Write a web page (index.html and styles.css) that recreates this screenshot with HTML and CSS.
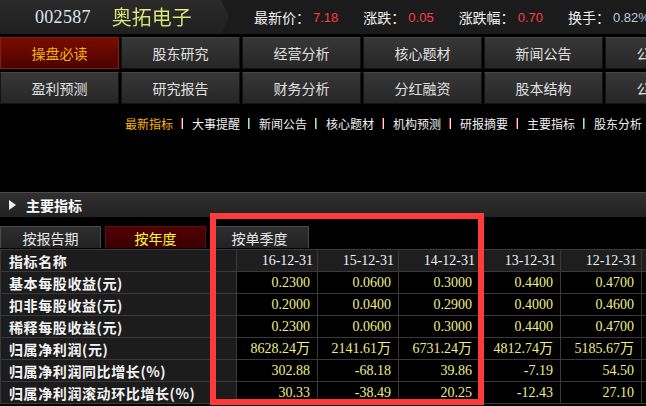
FILE: index.html
```html
<!DOCTYPE html>
<html lang="zh-CN">
<head>
<meta charset="utf-8">
<title>奥拓电子 002587</title>
<link rel="stylesheet" href="styles.css">
</head>
<body>
<div class="page">
  <div class="topbar">
    <div class="ticker">
      <span class="code">002587</span>
      <span class="name">奥拓电子</span>
    </div>
    <div class="quote"><span class="lbl">最新价：</span><span class="val">7.18</span></div>
    <div class="quote"><span class="lbl">涨跌：</span><span class="val">0.05</span></div>
    <div class="quote"><span class="lbl">涨跌幅：</span><span class="val">0.70</span></div>
    <div class="quote"><span class="lbl">换手：</span><span class="val neutral">0.82%</span></div>
  </div>

  <div class="nav">
    <a class="btn active">操盘必读</a>
    <a class="btn">股东研究</a>
    <a class="btn">经营分析</a>
    <a class="btn">核心题材</a>
    <a class="btn">新闻公告</a>
    <a class="btn">公司概况</a>
    <a class="btn">盈利预测</a>
    <a class="btn">研究报告</a>
    <a class="btn">财务分析</a>
    <a class="btn">分红融资</a>
    <a class="btn">股本结构</a>
    <a class="btn">公司大事</a>
  </div>

  <div class="sublinks">
    <a class="sub current">最新指标</a><span class="sep"></span>
    <a class="sub">大事提醒</a><span class="sep alt"></span>
    <a class="sub">新闻公告</a><span class="sep alt"></span>
    <a class="sub">核心题材</a><span class="sep"></span>
    <a class="sub">机构预测</a><span class="sep"></span>
    <a class="sub">研报摘要</a><span class="sep"></span>
    <a class="sub">主要指标</a><span class="sep alt"></span>
    <a class="sub">股东分析</a>
  </div>

  <div class="section">
    <span class="tri"></span>
    <span class="section-title">主要指标</span>
  </div>

  <div class="tabs">
    <span class="tab">按报告期</span>
    <span class="tab active">按年度</span>
    <span class="tab">按单季度</span>
  </div>

  <table class="data">
    <colgroup>
      <col class="c-name">
      <col class="c-val"><col class="c-val"><col class="c-val"><col class="c-val"><col class="c-val"><col class="c-val">
    </colgroup>
    <thead>
      <tr>
        <th class="nm">指标名称</th>
        <th>16-12-31</th><th>15-12-31</th><th>14-12-31</th><th>13-12-31</th><th>12-12-31</th><th>11-12-31</th>
      </tr>
    </thead>
    <tbody>
      <tr><td class="nm">基本每股收益(元)</td><td>0.2300</td><td>0.0600</td><td>0.3000</td><td>0.4400</td><td>0.4700</td><td>0.5000</td></tr>
      <tr><td class="nm">扣非每股收益(元)</td><td>0.2000</td><td>0.0400</td><td>0.2900</td><td>0.4000</td><td>0.4600</td><td>0.4800</td></tr>
      <tr><td class="nm">稀释每股收益(元)</td><td>0.2300</td><td>0.0600</td><td>0.3000</td><td>0.4400</td><td>0.4700</td><td>0.5000</td></tr>
      <tr><td class="nm">归属净利润(元)</td><td>8628.24万</td><td>2141.61万</td><td>6731.24万</td><td>4812.74万</td><td>5185.67万</td><td>5500.00万</td></tr>
      <tr><td class="nm">归属净利润同比增长(%)</td><td>302.88</td><td>-68.18</td><td>39.86</td><td>-7.19</td><td>54.50</td><td>20.00</td></tr>
      <tr><td class="nm">归属净利润滚动环比增长(%)</td><td>30.33</td><td>-38.49</td><td>20.25</td><td>-12.43</td><td>27.10</td><td>10.00</td></tr>
    </tbody>
  </table>

  <div class="highlight"></div>
</div>
</body>
</html>
```

FILE: styles.css
```css
html, body {
  margin: 0;
  padding: 0;
  background: #000;
  overflow: hidden;
}
body {
  width: 646px;
  height: 406px;
  font-family: "Noto Sans CJK SC", "Liberation Sans", sans-serif;
  color: #e6e6e6;
}
.page {
  position: relative;
  width: 646px;
  height: 406px;
  overflow: hidden;
}

/* top bar */
.topbar {
  display: flex;
  align-items: center;
  height: 34px;
  background: #1b1b1b;
  white-space: nowrap;
}
.ticker {
  display: flex;
  align-items: center;
  width: 229px;
  height: 34px;
  flex: none;
  padding-left: 35px;
  box-sizing: border-box;
  background: linear-gradient(#2a2a2a, #1f1f1f);
  clip-path: polygon(0 0, 221px 0, 229px 50%, 221px 100%, 0 100%);
}
.code {
  font-family: "Liberation Serif", serif;
  font-size: 18px;
  color: #dde6f0;
  letter-spacing: 0.3px;
}
.name {
  margin-left: 21px;
  font-size: 20px;
  line-height: 24px;
  color: #e2e27a;
  background: linear-gradient(#f4f07a, #c4e07c);
  -webkit-background-clip: text;
  background-clip: text;
  -webkit-text-fill-color: transparent;
}
.quote {
  display: flex;
  align-items: center;
  margin-left: 25px;
  flex: none;
}
.quote:first-of-type { margin-left: 28px; }
.lbl {
  font-size: 14px;
  color: #f2f2f2;
}
.val {
  margin-left: 3px;
  font-family: "Liberation Sans", sans-serif;
  font-size: 13px;
  color: #ff3b3b;
}
.val.neutral { color: #b9c9da; }

/* nav buttons */
.nav {
  display: grid;
  grid-template-columns: repeat(6, 119px);
  grid-auto-rows: 32px;
  column-gap: 2px;
  row-gap: 3px;
  margin-top: 3px;
  width: 730px;
}
.btn {
  display: flex;
  align-items: center;
  justify-content: center;
  font-size: 14px;
  color: #e0e0e0;
  background: linear-gradient(#373737, #262626);
  border: 1px solid #141414;
  border-top-color: #454545;
  box-sizing: border-box;
}
.btn.active {
  color: #f7b400;
  background: linear-gradient(#7a0c02, #4a0300);
  border-color: #8c1a08;
}

/* sub links */
.sublinks {
  display: flex;
  align-items: center;
  justify-content: flex-end;
  height: 22px;
  margin-top: 8px;
  padding-right: 4px;
}
.sub {
  font-size: 12px;
  color: #f0f0f0;
  white-space: nowrap;
}
.sub.current { color: #ffb400; }
.sep {
  width: 2px;
  height: 11px;
  margin: 0 8.5px;
  background: linear-gradient(90deg, #c8232a 50%, #e8e8e8 50%);
}
.sep.alt {
  background: linear-gradient(90deg, #d0d0d0 50%, #2fa06a 50%);
}

/* section header */
.section {
  display: flex;
  align-items: center;
  height: 24px;
  margin-top: 58px;
  background: linear-gradient(#303030, #222);
  border-top: 1px solid #4a4a4a;
}
.tri {
  width: 0;
  height: 0;
  margin-left: 9px;
  border-left: 7px solid #f0f0f0;
  border-top: 5px solid transparent;
  border-bottom: 5px solid transparent;
}
.section-title {
  margin-left: 10px;
  font-size: 14px;
  font-weight: bold;
  color: #fff;
}

/* tabs */
.tabs {
  display: flex;
  gap: 4px;
  margin-top: 9px;
  height: 22px;
}
.tab {
  display: flex;
  align-items: center;
  justify-content: center;
  width: 101px;
  font-size: 14px;
  color: #e8e8e8;
  background: linear-gradient(#2e2e2e, #222);
  border: 1px solid #4a4a4a;
  border-bottom: none;
  box-sizing: border-box;
}
.tab:last-child { width: 99px; }
.tab.active {
  color: #ffff2a;
  background: linear-gradient(#520000, #3a0000);
  border-color: #5a1010;
}

/* data table */
.data {
  border-collapse: collapse;
  table-layout: fixed;
  width: 722px;
  margin-top: 1px;
}
.c-name { width: 236px; }
.c-val { width: 81px; }
.data th, .data td {
  height: 21px;
  padding: 0 7px 0 0;
  border: 1px solid #3a3a3a;
  text-align: right;
  font-family: "Liberation Serif", serif;
  font-size: 14px;
  line-height: 20px;
  white-space: nowrap;
  overflow: hidden;
}
.data th {
  background: #1e1e1e;
  font-weight: normal;
  color: #eef2f8;
  padding-right: 4px;
}
.data td {
  background: #000;
  color: #eeee88;
}
.data .nm {
  text-align: left;
  padding: 0 0 0 8px;
  background: #1c1c1c;
  color: #f4f4f4;
  font-family: "Noto Sans CJK SC", sans-serif;
  font-weight: bold;
  font-size: 14px;
  letter-spacing: 0.6px;
}

/* annotation overlay */
.highlight {
  position: absolute;
  left: 210px;
  top: 213px;
  width: 274px;
  height: 192px;
  border: 6px solid #ff3a3a;
  box-sizing: border-box;
  pointer-events: none;
}
```
